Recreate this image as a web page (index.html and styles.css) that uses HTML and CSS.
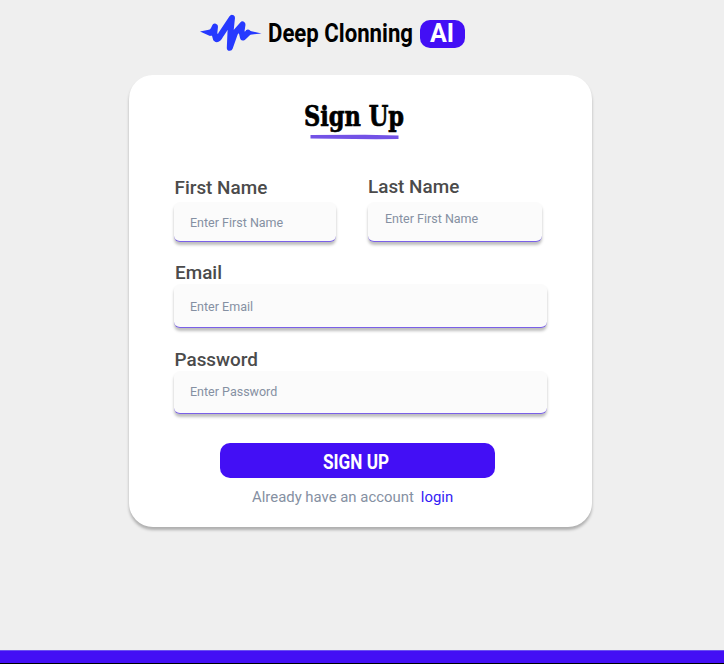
FILE: index.html
```html
<!DOCTYPE html>
<html lang="en">
<head>
<meta charset="utf-8">
<title>Deep Clonning AI</title>
<link rel="stylesheet" href="styles.css">
</head>
<body>
<header class="brand">
  <svg class="wave" width="62" height="40" viewBox="0 0 62 40">
    <path d="M0 17.500 L10 15.500 L14 19.500 L10 22 Z M46 16 L61.500 19.500 L50 20.700 L45 25Z" fill="#2639ff"/>
    <path d="M11.500 18.500 Q14 15.500 15 12.500 L14.300 19 L16 24.800 Q18 26.500 21 20.500 L32 3.800 L30.500 18 L29.800 33.800 L35 19 L42.500 10.500 L41.500 17 L43 23.500 Q45 22 48 18.800" fill="none" stroke="#2639ff" stroke-width="6" stroke-linecap="round" stroke-linejoin="round"/>
  </svg>
  <svg class="brand-name" width="146" height="36" viewBox="0 0 146 36"><text x="0" y="27" textLength="145" lengthAdjust="spacingAndGlyphs">Deep Clonning</text></svg>
  <span class="badge">AI</span>
</header>
<main class="card">
  <h1 class="title">
    <svg width="104" height="44" viewBox="0 0 104 44"><text x="1" y="30.500" textLength="100" lengthAdjust="spacingAndGlyphs">Sign Up</text><path d="M7.500 40 L62 39.800 L95.500 40.500 V44 L73 44.300 L7.500 43.500Z" fill="#7352e6"/></svg>
  </h1>
  <form>
    <div class="names">
      <div class="field first"><label for="first">First Name</label><input id="first" type="text" placeholder="Enter First Name"></div>
      <div class="field last"><label for="last">Last Name</label><input id="last" type="text" placeholder="Enter First Name"></div>
    </div>
    <div class="field email"><label for="email">Email</label><input id="email" type="email" placeholder="Enter Email"></div>
    <div class="field password"><label for="password">Password</label><input id="password" type="password" placeholder="Enter Password"></div>
    <button class="submit" type="button"><svg width="68" height="28" viewBox="0 0 68 28"><text x="1" y="22" textLength="66" lengthAdjust="spacingAndGlyphs">SIGN UP</text></svg></button>
  </form>
  <p class="account"><span>Already have an account</span><a>login</a></p>
</main>
<footer class="footer"></footer>
</body>
</html>
```
FILE: styles.css
```css
* { box-sizing: border-box; }
body {
  margin: 0;
  height: 664px;
  display: flex;
  flex-direction: column;
  overflow: hidden;
  background: #efefef;
  font-family: Roboto, "Liberation Sans", sans-serif;
}
svg { overflow: visible; }
.brand { height: 75px; padding: 14px 0 0 200px; display: flex; align-items: flex-start; flex: none; }
.wave { margin-right: 6px; }
.brand-name { font-size: 25px; font-weight: 700; margin-top: 1px; }
.badge {
  width: 45px;
  height: 28px;
  margin: 6px 0 0 6px;
  padding-right: 1px;
  border-radius: 10px;
  background: #430ff5;
  color: #fff;
  font-size: 25px;
  line-height: 28px;
  font-weight: 700;
  text-align: center;
}
.card {
  width: 462.5px;
  height: 452px;
  flex: none;
  margin-left: 129px;
  padding-left: 45px;
  border-radius: 24px;
  background: #fff;
  box-shadow: 0 3px 3px rgba(0, 0, 0, .27);
}
.title { margin: 20px 0 0 129px; height: 82px; font: 700 27px "DejaVu Serif", serif; }
.title text { stroke: #000; stroke-width: .7px; }
.title svg, .submit svg { display: block; }
.names { display: flex; gap: 32px; height: 84px; align-items: flex-start; }
.field { display: flex; flex-direction: column; }
.first { width: 162px; }
.last { width: 174px; }
.email { width: 373px; height: 87px; }
.password { width: 373px; height: 95px; }
label { height: 25px; line-height: 22px; color: #4b4b4b; font-size: 18.900px; font-weight: 500; padding-left: .5px; }
.last label { line-height: 19px; padding-left: 0; }
.email label, .password label { height: 23px; line-height: 23px; }
.email label { padding-left: 1px; }
input {
  width: 100%;
  height: 40px;
  padding: 1px 16px 0;
  border: 0;
  border-bottom: 1px solid #7a60e8;
  border-radius: 6px;
  outline: 0;
  background: #fbfbfb;
  box-shadow: 0 3px 3px rgba(0, 0, 0, .26);
  font: 12.500px Roboto, sans-serif;
}
.last input { padding: 0 16px 7px 17px; }
.email input { height: 44px; }
.password input { height: 43px; padding: 0 16px 1px; }
input::placeholder { color: #8590a2; opacity: 1; }
.submit {
  display: flex;
  justify-content: center;
  width: 275px;
  height: 35px;
  margin-left: 46px;
  padding: 4px 4px 0 0;
  border: 0;
  border-radius: 10px;
  background: #430ff5;
  color: #fff;
  font: 700 20px Roboto, sans-serif;
}
.submit text { fill: #fff; }
.account { display: flex; gap: 7px; margin: 9px 0 0 78px; font-size: 14.900px; line-height: 20px; color: #8590a2; }
.account a { color: #331df5; }
.footer { height: 14px; flex: none; margin-top: auto; background: #430ff5; border-top: 1px solid #6a50f0; border-bottom: 1px solid #000; }
```
